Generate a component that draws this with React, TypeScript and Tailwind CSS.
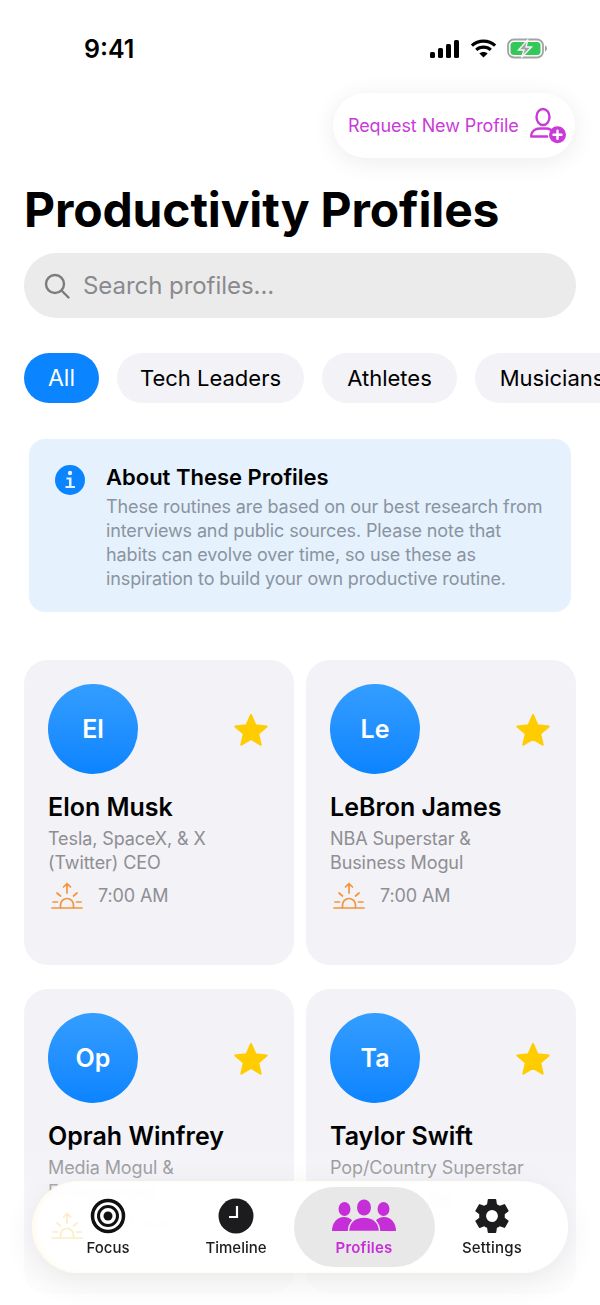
import React from 'react';
import { IoSettingsSharp } from 'react-icons/io5';

const font = { fontFamily: 'Inter, "Noto Sans", sans-serif' };

const profiles = [
  { initials: 'El', name: 'Elon Musk', role: ['Tesla, SpaceX, & X', '(Twitter) CEO'], wake: '7:00 AM' },
  { initials: 'Le', name: 'LeBron James', role: ['NBA Superstar &', 'Business Mogul'], wake: '7:00 AM' },
  { initials: 'Op', name: 'Oprah Winfrey', role: ['Media Mogul &', 'Entrepreneur'], wake: '6:02 AM' },
  { initials: 'Ta', name: 'Taylor Swift', role: ['Pop/Country Superstar'], wake: '8:00 AM' },
];

function StatusIcons() {
  return (
    <div className="flex items-center gap-[10px]">
      <svg width="30" height="18" viewBox="0 0 30 18" fill="#000">
        <rect x="0" y="12" width="5" height="6" rx="1.5" />
        <rect x="8" y="8" width="5" height="10" rx="1.5" />
        <rect x="16" y="4" width="5" height="14" rx="1.5" />
        <rect x="24" y="0" width="5" height="18" rx="1.5" />
      </svg>
      <svg width="27" height="19" viewBox="0 0 25 18" fill="none" stroke="#000" strokeWidth="3">
        <path d="M1.5 6.2C7.6 .6 17.4 .6 23.5 6.2" />
        <path d="M5.6 10.3c3.8-3.4 10-3.4 13.8 0" />
        <path d="M12.5 17.5l-3.9-3.700c2.200-1.900 5.600-1.900 7.800 0z" fill="#000" stroke="none" />
      </svg>
      <svg width="40" height="21" viewBox="0 0 40 21" fill="none">
        <rect x="1" y="1.500" width="35" height="18" rx="6" stroke="#a3a3a3" strokeWidth="1.800" />
        <rect x="3.500" y="4" width="30" height="13" rx="3.500" fill="#34c759" />
        <path d="M38 7.500v6c1.400-.4 2-1.600 2-3s-.6-2.600-2-3z" fill="#a3a3a3" />
        <path d="M21 1.500L11.500 12h5.500L14.500 19.500 24.500 9h-5.500z" fill="#a3a3a3" stroke="#f4f4f4" strokeWidth="1.400" />
      </svg>
    </div>
  );
}

function AddUserIcon() {
  return (
    <svg width="38" height="38" viewBox="0 0 38 38" fill="none" stroke="#c93bd9" strokeWidth="2.400" strokeLinecap="round">
      <ellipse cx="14" cy="10" rx="6.500" ry="8" />
      <path d="M2.200 29.500c0-5 3.800-8 8.800-8h6c2 0 3.500.4 4.500 1.200M2.200 29.500h16" />
      <circle cx="28.500" cy="27.700" r="8.500" fill="#c93bd9" stroke="none" />
      <path d="M28.500 23.700v8M24.500 27.700h8" stroke="#fff" strokeWidth="2.400" />
    </svg>
  );
}

function SunriseIcon({ color = '#f4943a' }: { color?: string }) {
  return (
    <svg width="34" height="28" viewBox="0 0 34 28" fill="none" stroke={color} strokeWidth="1.700" strokeLinecap="round" strokeLinejoin="round">
      <path d="M1 26h30" />
      <path d="M9.500 25.500V23a6.500 6.500 0 0113 0v2.500" />
      <path d="M16 11V1.500M12.500 5L16 1.500 19.500 5" />
      <path d="M6 11l3.500 3M26 11l-3.500 3M2 20h4.500M25.500 20H30" />
    </svg>
  );
}

function Star() {
  return (
    <svg width="34" height="33" viewBox="0 0 34 33" fill="#ffcc00" stroke="#ffcc00" strokeWidth="2" strokeLinejoin="round">
      <path d="M17 2l4.500 10.300 11.200 1.100-8.500 7.400 2.500 10.900L17 26l-9.700 5.700 2.500-10.900-8.500-7.400 11.200-1.100z" />
    </svg>
  );
}

function ProfileCard({ p }: { p: (typeof profiles)[number] }) {
  return (
    <div className="h-[305px] rounded-[24px] bg-[#f2f2f7] pt-6 pl-6 pr-[26px]">
      <div className="flex items-center justify-between">
        <div className="flex h-[90px] w-[90px] items-center justify-center rounded-full bg-gradient-to-b from-[#339dff] to-[#0a84ff] pt-[2px] text-[25px] font-semibold text-white">
          {p.initials}
        </div>
        <Star />
      </div>
      <div className="mt-[17px] text-[25px] leading-[32px] font-semibold text-black">{p.name}</div>
      <div className="mt-[4px] text-[18px] leading-[24px] tracking-[-0.1px] text-[#8e8e93]">
        {p.role.map((line) => (
          <div key={line}>{line}</div>
        ))}
      </div>
      <div className="mt-[6px] flex items-center gap-[13px] pl-[3px] text-[18px] leading-[28px] tracking-[-0.1px] text-[#8e8e93]">
        <SunriseIcon />
        <span className="mt-[1px]">{p.wake}</span>
      </div>
    </div>
  );
}

function TabItem({ label, icon, active, labelClass }: { label: string; icon: React.ReactNode; active?: boolean; labelClass?: string }) {
  return (
    <div
      className={
        active
          ? 'mx-[-6.5px] flex h-[80px] w-[141px] shrink-0 flex-col items-center justify-center rounded-[40px] bg-[#e8e8e8] text-[#c62fd8]'
          : 'flex h-[80px] w-[128px] shrink-0 flex-col items-center justify-center text-[#1c1c1e]'
      }
    >
      <div className="flex h-[36px] items-center justify-center">{icon}</div>
      <span className={`mt-[5px] text-[15px] leading-[18px] ${labelClass ?? 'font-medium'}`}>{label}</span>
    </div>
  );
}

export default function App() {
  return (
    <div className="relative h-[1305px] w-[600px] overflow-hidden bg-white" style={font}>
      {/* status bar */}
      <div className="flex h-[93px] items-start justify-between pt-[34px] pr-[53px] pl-[84px]">
        <span className="text-[25px] leading-[31px] font-semibold text-black">9:41</span>
        <div className="pt-[4px]">
          <StatusIcons />
        </div>
      </div>

      <div className="flex justify-end pr-[25px]">
        <div className="flex h-[65px] w-[242px] items-center gap-[10px] rounded-full bg-white pl-[15px] shadow-[0_4px_24px_rgba(0,0,0,0.08)]">
          <span className="text-[18px] tracking-[-0.1px] text-[#c93bd9]">Request New Profile</span>
          <AddUserIcon />
        </div>
      </div>

      <h1 className="mt-[22px] pl-6 text-[48px] leading-[60px] font-bold tracking-[-0.15px] text-black">Productivity Profiles</h1>

      <div className="mx-6 mt-[13px] flex h-[65px] items-center gap-[13px] rounded-full bg-[#ebebeb] pl-[20px]">
        <svg width="26" height="26" viewBox="0 0 26 26" fill="none" stroke="#7c7c80" strokeWidth="2.400" strokeLinecap="round">
          <circle cx="11" cy="11" r="9" />
          <path d="M18 18l6.500 6.500" />
        </svg>
        <span className="pt-[1px] text-[24px] tracking-[-0.05px] text-[#8a8a8e]">Search profiles...</span>
      </div>

      {/* filter chips */}
      <div className="mt-[35px] flex gap-[18px] pl-6 whitespace-nowrap">
        <div className="flex h-[50px] w-[75px] shrink-0 items-center justify-center rounded-full bg-[#0a84ff] text-[23px] text-white">All</div>
        <div className="flex h-[50px] w-[187px] shrink-0 items-center justify-center rounded-full bg-[#f2f2f7] text-[22px] text-black">Tech Leaders</div>
        <div className="flex h-[50px] w-[135px] shrink-0 items-center justify-center rounded-full bg-[#f2f2f7] text-[22px] text-black">Athletes</div>
        <div className="flex h-[50px] w-[154px] shrink-0 items-center justify-center rounded-full bg-[#f2f2f7] text-[22px] text-black">Musicians</div>
      </div>

      {/* info box */}
      <div className="mx-[29px] mt-[36px] flex h-[173px] gap-[21px] rounded-[16px] bg-[#e5f1fd] pt-[24px] pl-[26px]">
        <div className="mt-[2px] flex h-[30px] w-[30px] shrink-0 items-center justify-center rounded-full bg-[#0a84ff]">
          <svg width="14" height="20" viewBox="0 0 14 20" fill="#e5f1fd">
            <circle cx="7" cy="3" r="2.200" />
            <path d="M3.500 7.500h5v8.500H12v2H2.500v-2h3.500V9.500H3.500z" />
          </svg>
        </div>
        <div>
          <div className="text-[22px] leading-[28px] font-semibold text-black">About These Profiles</div>
          <div className="mt-[4px] w-[450px] text-[18px] leading-[24px] tracking-[-0.12px] text-[#8a94a0]">
            These routines are based on our best research from interviews and public sources. Please note that habits can evolve over time, so use these as inspiration to build your own productive routine.
          </div>
        </div>
      </div>

      {/* profile grid */}
      <div className="mx-6 mt-[48px] grid grid-cols-2 gap-x-3 gap-y-6">
        {profiles.map((p) => (
          <ProfileCard key={p.name} p={p} />
        ))}
      </div>

      {/* bottom fade + tab bar */}
      <div className="absolute inset-x-0 bottom-0 h-[165px] bg-gradient-to-b from-white/0 to-white/95" />
      <div className="absolute bottom-[32px] left-[32px] flex h-[92px] w-[536px] items-center rounded-[46px] bg-white/[0.96] pl-[12px] shadow-[0_8px_32px_rgba(0,0,0,0.08),inset_3px_0_4px_rgba(253,226,160,0.18)] backdrop-blur-[2px]">
        <div className="absolute top-[31px] left-[19px] blur-[0.5px]">
          <SunriseIcon color="#fcedc8" />
        </div>
        <TabItem
          label="Focus"
          icon={
            <svg width="36" height="36" viewBox="0 0 36 36" fill="none" stroke="#111" strokeWidth="3">
              <circle cx="18" cy="18" r="15.500" strokeWidth="3.500" />
              <circle cx="18" cy="18" r="9.500" />
              <circle cx="18" cy="18" r="4.500" fill="#111" stroke="none" />
            </svg>
          }
        />
        <TabItem
          label="Timeline"
          icon={
            <svg width="36" height="36" viewBox="0 0 36 36">
              <circle cx="18" cy="18" r="17.500" fill="#1c1c1e" />
              <path d="M19 8v11h-8" fill="none" stroke="#fff" strokeWidth="2.200" />
            </svg>
          }
        />
        <TabItem
          active
          label="Profiles"
          labelClass="font-semibold tracking-[0.2px]"
          icon={
            <svg width="64" height="34" viewBox="0 0 64 34" fill="#c62fd8">
              <ellipse cx="12.500" cy="10" rx="6" ry="7" />
              <ellipse cx="51.500" cy="10" rx="6" ry="7" />
              <ellipse cx="32" cy="8.500" rx="7" ry="8" />
              <path d="M0 32c0-8 5-14 12-14s12 6 12 14z" />
              <path d="M40 32c0-8 5-14 12-14s12 6 12 14z" />
              <path d="M16.500 32.500c0-9 6-14.500 15.500-14.500s15.500 5.500 15.500 14.500z" stroke="#e8e8e8" strokeWidth="1.500" />
            </svg>
          }
        />
        <TabItem
          label="Settings"
          labelClass="font-medium tracking-[0.2px]"
          icon={<IoSettingsSharp size={38} color="#1c1c1e" />}
        />
      </div>
    </div>
  );
}
